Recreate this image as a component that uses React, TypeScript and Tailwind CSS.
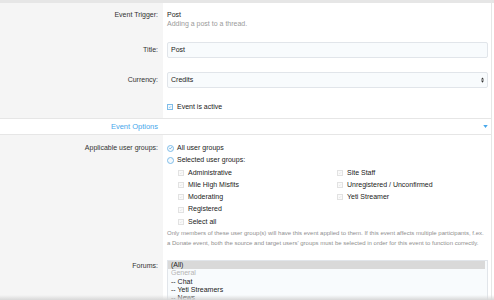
import { ReactNode } from "react";

function Check({ className }: { className?: string }) {
  return (
    <svg viewBox="0 0 10 10" className={className} fill="none">
      <path d="M2.5 5.2 L4.3 7 L7.6 3.2" stroke="currentColor" strokeWidth="1.2" />
    </svg>
  );
}

function Box({ on, disabled }: { on?: boolean; disabled?: boolean }) {
  return (
    <span
      className={
        disabled
          ? "w-[6px] h-[6px] border border-[#e2e2e2] bg-[#fafafa] text-[#d6d6d6] flex items-center justify-center shrink-0"
          : "w-[6px] h-[6px] border border-[#7fbde9] bg-[#f4f9fd] text-[#3d97d9] flex items-center justify-center shrink-0"
      }
    >
      {(on || disabled) && <Check className="w-[6px] h-[6px]" />}
    </span>
  );
}

function Radio({ on }: { on?: boolean }) {
  return (
    <span className="w-[7px] h-[7px] rounded-full border border-[#7fbde9] bg-[#f4f9fd] text-[#3d97d9] flex items-center justify-center shrink-0">
      {on && <Check className="w-[6px] h-[6px]" />}
    </span>
  );
}

function Row({ label, children, className }: { label?: ReactNode; children: ReactNode; className?: string }) {
  return (
    <div className={"flex " + (className ?? "")}>
      <div className="w-[163px] shrink-0 bg-[#f5f5f5] text-right pr-[5px] text-[#333]">{label}</div>
      <div className="flex-1 pl-[4px] pr-[3px]">{children}</div>
    </div>
  );
}

const leftGroups = ["Administrative", "Mile High Misfits", "Moderating", "Registered", "Select all"];
const rightGroups = ["Site Staff", "Unregistered / Unconfirmed", "Yeti Streamer"];

export default function App() {
  return (
    <div
      className="relative w-[494px] h-[300px] overflow-hidden bg-white text-[7px] text-[#222]"
      style={{ fontFamily: '"Liberation Sans", Arial, sans-serif' }}
    >
      <div className="h-[3px] bg-[#e6e6e6]" />
      <div className="border-r border-[#e6e6e6] mr-[2px]">
        {/* trigger */}
        <Row label={<div className="pt-[7px] leading-[9px]">Event Trigger:</div>} className="h-[34px]">
          <div className="pt-[7px] leading-[9px]">
            <div>Post</div>
            <div className="text-[#9a9a9a]">Adding a post to a thread.</div>
          </div>
        </Row>

        <Row label={<div className="pt-[5px] leading-[16px]">Title:</div>} className="h-[28px]">
          <div className="mt-[5px] h-[16px] border border-[#e1e5ea] rounded-[2px] bg-[#f8fbfd] pl-[3px] leading-[14px]">
            Post
          </div>
        </Row>

        <Row label={<div className="pt-[7px] leading-[16px]">Currency:</div>} className="h-[28px]">
          <div className="mt-[7px] h-[16px] border border-[#e1e5ea] rounded-[2px] bg-[#f8fbfd] pl-[3px] pr-[3px] flex items-center justify-between">
            <span>Credits</span>
            <svg viewBox="0 0 4 8" className="w-[3px] h-[6px]">
              <path d="M0 3.3 L2 0.5 L4 3.3 Z M0 4.7 L2 7.5 L4 4.7 Z" fill="#333" />
            </svg>
          </div>
        </Row>

        <Row className="h-[25px]">
          <div className="pt-[10px] flex items-center gap-[4px] leading-[8px]">
            <Box on />
            <span>Event is active</span>
          </div>
        </Row>

        {/* header */}
        <div className="flex h-[17px] border-t border-b border-[#e6e6e6] items-center">
          <div className="w-[163px] shrink-0 text-right pr-[5px] text-[#47a7eb] text-[7.5px]">Event Options</div>
          <div className="flex-1 flex justify-end pr-[3px]">
            <svg viewBox="0 0 6 4" className="w-[5px] h-[3px]">
              <path d="M0 0 L6 0 L3 4 Z" fill="#47a7eb" />
            </svg>
          </div>
        </div>

        <Row label={<div className="pt-[7px] leading-[12.3px]">Applicable user groups:</div>}>
          <div className="pt-[7px] leading-[12.3px]">
            <div className="flex items-center gap-[3px]">
              <Radio on />
              <span>All user groups</span>
            </div>
            <div className="flex items-center gap-[3px]">
              <Radio />
              <span>Selected user groups:</span>
            </div>
            <div className="flex pl-[11px]">
              <div className="w-[159px]">
                {leftGroups.map((g) => (
                  <div key={g} className="flex items-center gap-[4px]">
                    <Box disabled />
                    <span>{g}</span>
                  </div>
                ))}
              </div>
              <div>
                {rightGroups.map((g) => (
                  <div key={g} className="flex items-center gap-[4px]">
                    <Box disabled />
                    <span>{g}</span>
                  </div>
                ))}
              </div>
            </div>
            <div className="text-[6px] leading-[10px] text-[#8f8f8f] pb-[12px] whitespace-nowrap">
              <div>
                Only members of these user group(s) will have this event applied to them. If this event affects
                multiple participants, f.ex.
              </div>
              <div>
                a Donate event, both the source and target users' groups must be selected in order for this event to
                function correctly.
              </div>
            </div>
          </div>
        </Row>

        <Row label={<div className="pt-[1px] leading-[8.3px]">&nbsp;</div>} className="h-[60px]">
          <div className="border border-[#e1e5ea] bg-[#f8fbfd] leading-[8.3px]">
            <div className="bg-[#d9d9d9] pl-[3px] mr-[2px]">(All)</div>
            <div className="pl-[3px] text-[#b4b4b4]">General</div>
            <div className="pl-[3px]">-- Chat</div>
            <div className="pl-[3px]">-- Yeti Streamers</div>
            <div className="pl-[3px]">-- News</div>
          </div>
        </Row>
      </div>
      <div className="absolute left-[108px] top-[262px] w-[50px] text-right leading-[8px] text-[#333]">Forums:</div>
      <div className="absolute left-0 right-0 bottom-0 h-[5px] bg-gradient-to-b from-transparent to-[#d8d8d8] pointer-events-none" />
    </div>
  );
}
